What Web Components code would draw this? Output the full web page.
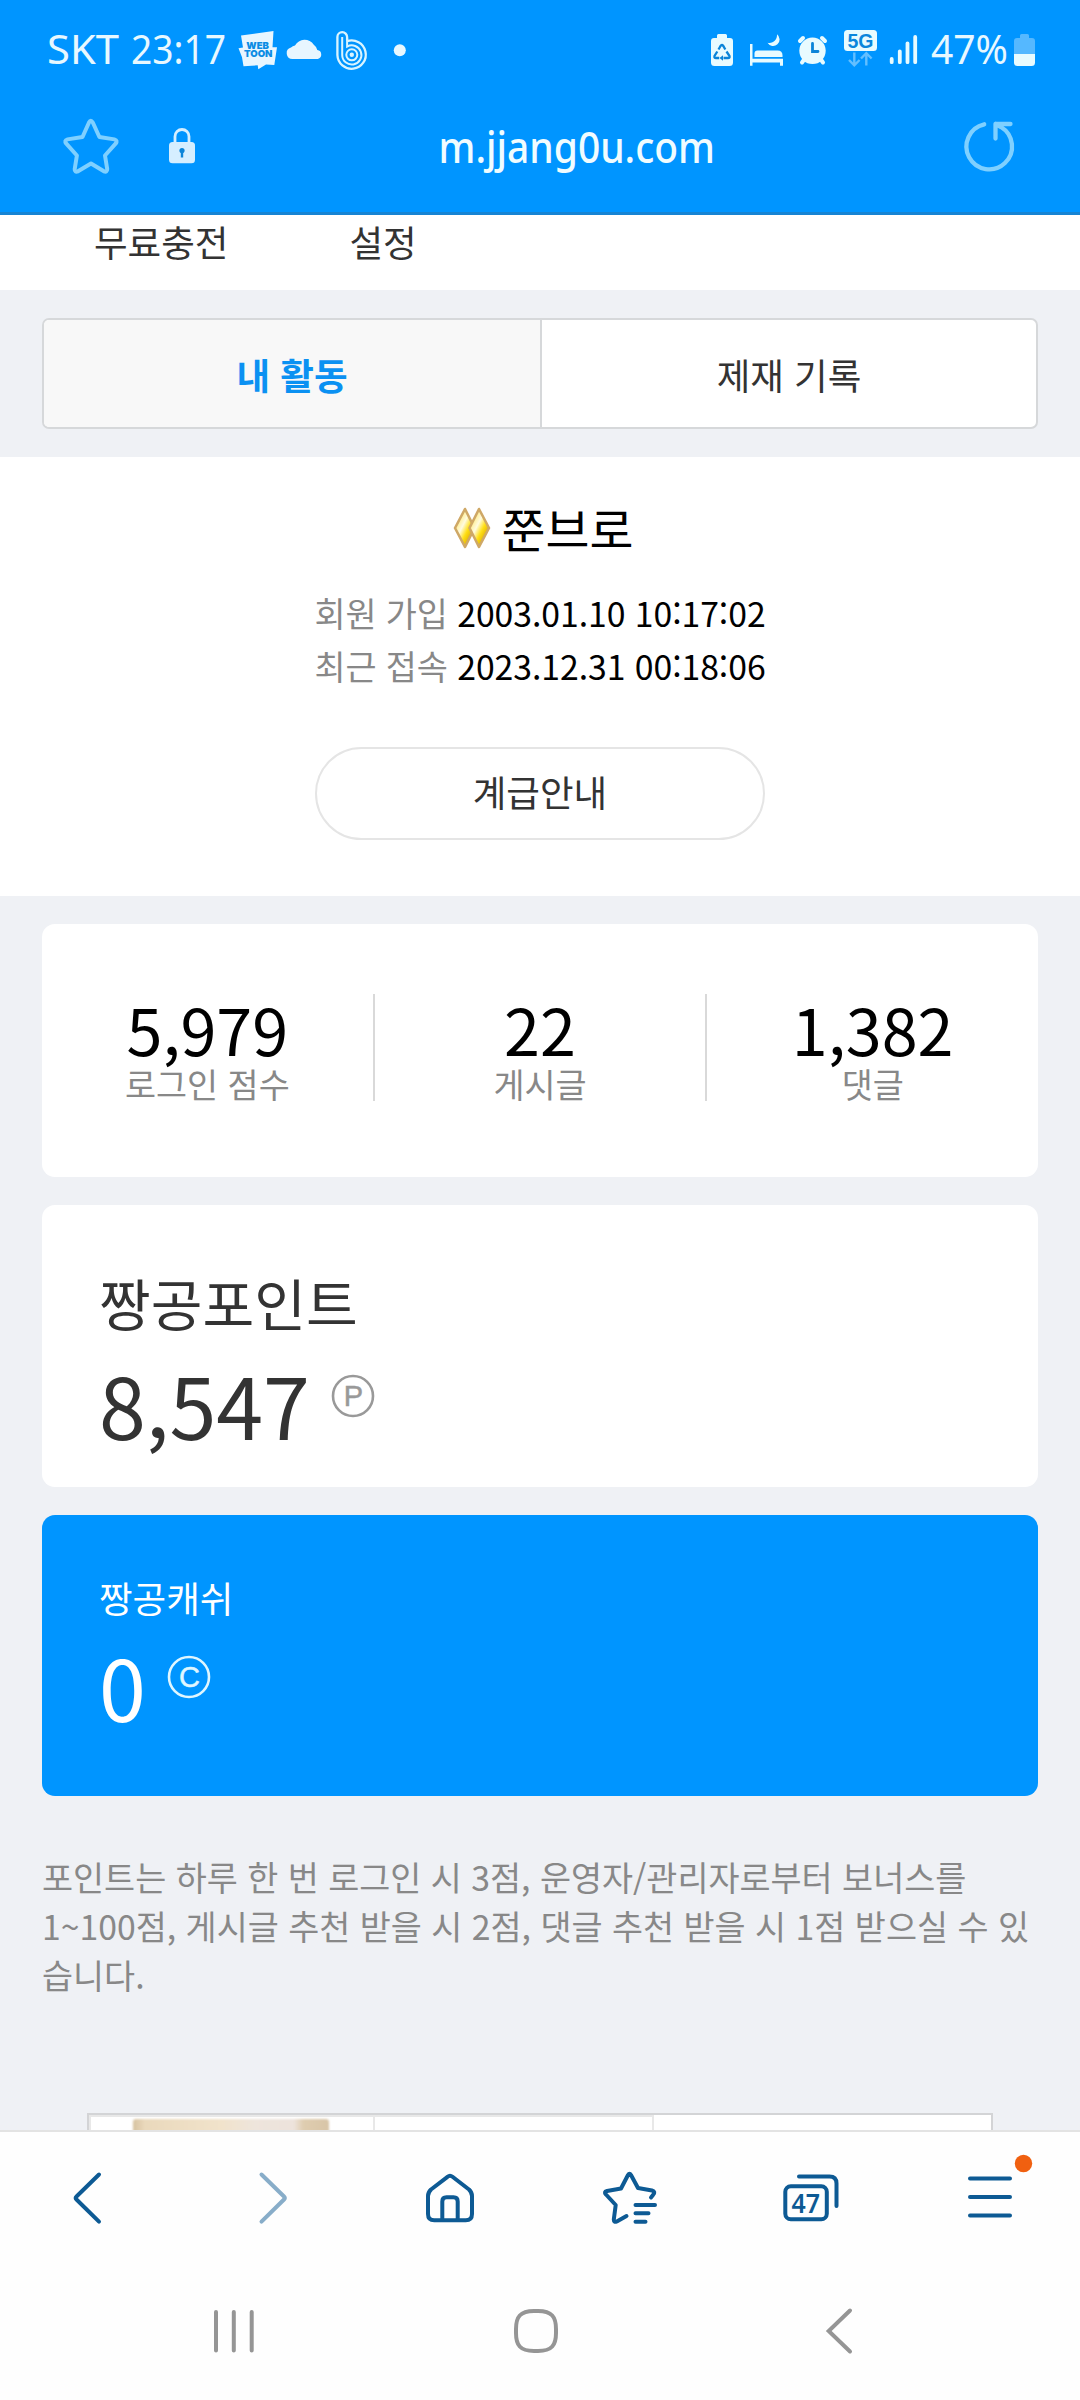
<!DOCTYPE html>
<html lang="ko">
<head>
<meta charset="utf-8">
<title>내 활동</title>
<style>
html,body{margin:0;padding:0}
body{width:1080px;height:2400px;overflow:hidden;background:#eff1f5;font-family:"Noto Sans CJK KR",sans-serif;color:#333}
</style>
</head>
<body>
<my-page></my-page>
<script>
const define = (name, css, html) => customElements.define(name, class extends HTMLElement {
  constructor() {
    super();
    this.attachShadow({mode: 'open'}).innerHTML = `<style>*{box-sizing:border-box}svg{display:block;flex:none;overflow:visible}${css}</style>${html}`;
  }
});

define('status-bar', `
:host{display:flex;justify-content:space-between;height:96px;padding:20px 45px 0 46px}
div{display:flex;height:60px}
text{font-family:"Noto Sans",sans-serif;fill:#e8f8ff}
.w{fill:#0b8ce4;font-family:Inter,sans-serif;font-weight:900}`,
`<div>
<svg width="190" height="60" viewBox="46 20 190 60"><text x="47" y="63.8" font-size="39.5" textLength="72" lengthAdjust="spacingAndGlyphs">SKT</text><text x="131" y="63.8" font-size="39.5" textLength="95" lengthAdjust="spacingAndGlyphs">23:17</text></svg>
<svg width="46" height="60" viewBox="236 20 46 60"><path d="M241 35.5 273.5 31 272.5 47.3H277L274.3 65 266 64.5 258.3 69.3 257.7 65.3 243.5 66.3 242 57.3 238.5 48.3 243 47.5Z" fill="#e8f6ff"/><g font-size="9.6"><text class="w" x="246.3" y="48.600" textLength="22.6" lengthAdjust="spacingAndGlyphs">WEB</text><text class="w" x="244" y="57.2" textLength="28.5" lengthAdjust="spacingAndGlyphs">TOON</text></g></svg>
<svg width="46" height="60" viewBox="282 20 46 60"><path d="M292.5 59a5.8 5.8 0 0 1-1.500-11.400 7 7 0 0 1 4-2.200 11 11 0 0 1 18.800-.6 9 9 0 0 1 3.500 5.200 4.600 4.600 0 0 1 .5 9Z" fill="#e8f6ff"/></svg>
<svg width="56" height="60" viewBox="328 20 56 60" fill="none" stroke="#d9f4ff" stroke-width="2.300"><path d="M347.100 40.600V37a4.800 4.800 0 0 0-9.700 0V55a14.200 14.200 0 1 0 9.700-13.900"/><path d="M342.200 37V55a9.600 9.600 0 1 0 4.900-8.400V38" stroke-width="2"/><circle cx="351.800" cy="54.800" r="5.500" stroke-width="2"/><circle cx="351.800" cy="54.800" r="2.200" fill="#d9f4ff" stroke="none"/></svg>
<svg width="30" height="60" viewBox="384 20 30 60"><circle cx="399.800" cy="50.200" r="6" fill="#e8f8ff"/></svg>
</div>
<div>
<svg width="34" height="60" viewBox="706 20 34 60"><path d="M717 38v-2.500q0-1.500 1.500-1.500h7q1.500 0 1.500 1.500V38h3q3 0 3 3V62.500q0 3.500-3.500 3.500h-15q-3.500 0-3.500-3.500V41q0-3 3-3Z" fill="#e8fbff"/><path d="M718.500 49.500 720.500 46q1.300-2 2.800 0l2 3.500M717.300 51.500 714.500 56q-.6 2 1.500 2h3.200M726.500 51.500l3 4.500q.6 2-1.500 2h-4.500" fill="none" stroke="#0b84d8" stroke-width="2.300"/><path d="M723 55.300v5.500l-3.500-2.800Z" fill="#0b84d8"/></svg>
<svg width="50" height="60" viewBox="740 20 50 60" fill="#e8fbff"><path d="M750 44h2.500v14.700h30.500v7h-3v-3.200h-27.500v3.200H750Z"/><path d="M754.500 57v-3.500q0-3 3-3h20q5 0 5 5V57Z"/><path d="M777 34.300a6.500 6.500 0 1 1-9.500 8.500c5 1.500 10-3 9.500-8.500Z"/></svg>
<svg width="48" height="60" viewBox="790 20 48 60" fill="none" stroke="#e8fbff" stroke-width="4" stroke-linecap="round"><circle cx="812.500" cy="50.800" r="13.200" fill="#e8fbff" stroke="none"/><path d="M800 41 803 38M825 41 822 38M804.500 59 802 62.500M820.500 59 823 62.500"/><path d="M812.500 43.500V51.500H818" stroke="#0b84d8" stroke-width="2.800"/></svg>
<svg width="46" height="60" viewBox="838 20 46 60"><rect x="844" y="30" width="33" height="21" rx="3.500" fill="#e8fbff"/><text x="847.500" y="47.700" font-size="20" style="font-family:'Liberation Sans',sans-serif;font-weight:700;fill:#0b86dc" textLength="26" lengthAdjust="spacingAndGlyphs">5G</text><path d="M854.300 52.500V65M849 60l5.300 5.300 5.300-5.300M866.300 65.500V54M861 58.500l5.300-5.300 5.300 5.300" fill="none" stroke="#63bfff" stroke-width="2.400"/></svg>
<svg width="40" height="60" viewBox="884 20 40 60" stroke="#e8fbff" stroke-width="3.800" stroke-linecap="round"><path d="M891.700 59v3.200M899.800 51.300v10.900M907.500 43.300v18.900M915.200 37v25.200"/></svg>
<svg width="111" height="60" viewBox="924 20 111 60"><text x="931" y="63.800" font-size="39.500" textLength="77" lengthAdjust="spacingAndGlyphs">47%</text><path d="M1020 38v-2.500q0-1.500 1.500-1.500h6q1.500 0 1.500 1.500V38h3q3 0 3 3V54h-21V41q0-3 3-3Z" fill="#55b8ff"/><path d="M1014 54h21v8.500q0 3.500-3.500 3.500h-14q-3.500 0-3.500-3.500Z" fill="#e8fbff"/></svg>
</div>`);

define('address-bar', `
:host{display:flex;height:119px;border-bottom:3px solid #1784d3}
svg{height:100px}text{font-family:"Noto Sans",sans-serif;font-weight:500;fill:#f0fcff}`,
`<svg width="427" viewBox="0 98 427 100"><path d="M89 124.500q1.700-3.300 3.800 0l6.600 14.500 15 2.400q3.700 1 1.200 4.300L105 157.500l2.200 13.500q0 3.600-3.300 2.300L91 165.500 78 173.300q-3.500 1.300-3.300-2.300L76.900 157.500 66.300 145.700q-2.500-3.300 1.200-4.300l15-2.400Z" fill="none" stroke="#7fd0ff" stroke-width="4" stroke-linejoin="round"/><rect x="169" y="144" width="26" height="21.300" rx="3.500" fill="#d5eeff"/><path d="M175 145v-6.500a7 7 0 0 1 14 0V145" fill="none" stroke="#d5eeff" stroke-width="2.800"/><circle cx="182" cy="152.500" r="2.600" fill="#0b84d8"/><path d="M182 152v7.500" stroke="#0b84d8" stroke-width="2.400"/></svg>
<svg width="300" viewBox="427 98 300 100"><text x="438.500" y="164.500" font-size="43" textLength="276.500" lengthAdjust="spacingAndGlyphs">m.jjang0u.com</text></svg>
<svg width="353" viewBox="727 98 353 100" fill="none" stroke="#7fd0ff" stroke-width="4.300" stroke-linecap="round" stroke-linejoin="round"><path d="M984.200 126.300A22.800 22.800 0 1 0 1001 129L995.500 126V140.500M995.500 126H1010.500"/></svg>`);

define('sub-menu', `
:host{display:flex;gap:121px;height:75px;padding:0 94px;background:#fff;font-size:36.560px;line-height:54px}`,
`<span>무료충전</span><span>설정</span>`);

define('activity-tabs', `
:host{display:block;padding:28px 42px}
div{display:flex;height:111px;border:2px solid #d6d8da;border-radius:7px;background:#fff;overflow:hidden}
span{flex:1;text-align:center;font-size:36.560px;line-height:110px}
.on{flex:none;width:498px;background:#f8f8f8;color:#0b91f2;font-weight:700;border-right:2px solid #d6d8da}`,
`<div><span class="on">내 활동</span><span>제재 기록</span></div>`);

define('profile-box', `
:host{display:flex;flex-direction:column;align-items:center;height:439px;background:#fff;padding-top:36px;color:#000}
.n{display:flex;align-items:center;gap:11px;margin-left:6px;font-size:47.800px;line-height:70px}
.d{font-size:33.750px;line-height:53.330px;margin-top:23px;white-space:nowrap;letter-spacing:-.05px}
.d i{font-style:normal;color:#888}
.b{width:450px;height:93px;margin-top:54px;border:2px solid #e5e5e5;border-radius:47px;text-align:center;font-size:36.560px;line-height:86px;color:#333}`,
`<div class="n"><svg width="38" height="42" viewBox="454 507 38 42"><defs><linearGradient id="g" x1="0" y1="0" x2="1" y2="1"><stop offset=".2" stop-color="#ffe97a"/><stop offset=".42" stop-color="#fffbe0"/><stop offset=".6" stop-color="#ffdf14"/><stop offset=".9" stop-color="#c98e00"/></linearGradient></defs><g stroke="#cfa866" stroke-width="2.600" stroke-linejoin="round"><path d="M466 509 475.500 528 466 547 456 528Z" fill="url(#g)"/><path d="M480 509 490 528 480 547 470.500 528Z" fill="url(#g)"/></g></svg><span>쭌브로</span></div>
<div class="d"><i>회원 가입</i> 2003.01.10 10:17:02<br><i>최근 접속</i> 2023.12.31 00:18:06</div>
<div class="b">계급안내</div>`);

define('stat-item', `
:host{flex:1;display:flex;flex-direction:column;align-items:center;height:107px}
b{font-weight:400;font-size:64.690px;line-height:68px;color:#000}
span{font-size:33.750px;line-height:44px;color:#888}`,
`<b><slot></slot></b><span><slot name="label"></slot></span>`);

define('stats-card', `
:host{display:flex;height:253px;margin:0 42px;padding-top:70px;background:#fff;border-radius:13px}
stat-item+stat-item{border-left:2px solid #d9d9d9}`,
`<stat-item>5,979<span slot="label">로그인 점수</span></stat-item><stat-item>22<span slot="label">게시글</span></stat-item><stat-item>1,382<span slot="label">댓글</span></stat-item>`);

define('money-card', `
:host{display:flex;flex-direction:column;margin:0 42px;padding-left:57px;background:#fff;border-radius:13px;height:282px}
:host([cash]){background:#0095ff;color:#fff;height:281px}
.t{font-size:56.250px;line-height:80px;margin-top:57px}
.v{display:flex;gap:21px;font-size:84.400px;line-height:90px;margin-top:16px}
svg{margin-top:16px}
:host([cash]) .t{font-size:36.560px;line-height:52px}
:host([cash]) .v{margin-top:16px}
:host([cash]) svg{margin-top:15px}
.c{stroke:#999}.l{fill:#999;stroke:#999;stroke-width:.5}
:host([cash]) .c{stroke:#dff6ff}:host([cash]) .l{fill:#dff6ff;stroke:#dff6ff}`,
`<div class="t"><slot name="title"></slot></div><div class="v"><slot></slot><svg width="44" height="44"><circle class="c" cx="22" cy="22" r="20" fill="none" stroke-width="2.600"/><text class="l" x="22.500" y="32" text-anchor="middle" font-size="29" font-family="Liberation Sans,sans-serif"></text></svg></div>`);

define('ad-strip', `
:host{display:flex;width:906px;height:18px;margin-left:87px;border:2px solid #d3d4d6;border-bottom:0;background:#fff}
.a{width:284px;border:2px solid #e8e8e8;border-width:2px 0 0 2px;padding:2px 0 0 42px}
.a i{display:block;width:196px;height:15px;border-radius:3px 3px 0 0;background:linear-gradient(90deg,#d6c2a0,#ead9bc 6%,#f1e3cb 45%,#eee5dc 62%,#ede3dc 82%,#dfcdb0 87%,#d8c5a7);filter:blur(1px)}
.b{width:281px;border:2px solid #e8e8e8;border-bottom:0}`,
`<div class="a"><i></i></div><div class="b"></div>`);

define('browser-bar', `
:host{display:flex;justify-content:space-between;height:140px;background:#fefefe;border-top:2px solid #e3e3e3}
svg{height:138px;fill:none;stroke:#0d5a94;stroke-width:4;stroke-linecap:round;stroke-linejoin:round}`,
`<svg width="180" viewBox="0 2132 180 138"><path d="M99 2174.500 76.500 2196.500q-1.500 1.500 0 3L99 2221.700"/></svg>
<svg width="180" viewBox="180 2132 180 138" style="stroke:#88adc9"><path d="M261.500 2174.500 284 2196.500q1.500 1.500 0 3L261.500 2221.700"/></svg>
<svg width="180" viewBox="360 2132 180 138"><path d="M447.500 2176.800q2.500-2 5 0L469 2189.500q3 3 3 6.500V2214q0 6.300-6.300 6.300H434.300q-6.300 0-6.300-6.300V2196q0-3.500 3-6.500ZM442.300 2220v-18.500q0-4.200 4.200-4.200h7q4.200 0 4.200 4.200V2220"/></svg>
<svg width="180" viewBox="540 2132 180 138"><path d="M651 2197.500 653 2195q3-3.500-1-4.500L638 2188 631 2175q-1.500-2.500-3 0L621 2188.500 607 2191q-3.500 1-1 3.500L615.700 2205 613.800 2219.500q0 3.300 3 2L626.500 2216M635.500 2205H655M635.500 2213.300H648.500M635.500 2221.700H645.500"/></svg>
<svg width="180" viewBox="720 2132 180 138"><rect x="785.300" y="2186.300" width="41.500" height="33" rx="5.500"/><path d="M799 2176.500H829.500q7 0 7 7V2206"/><text x="791.500" y="2212.800" font-size="27.500" textLength="28.500" lengthAdjust="spacingAndGlyphs" style="fill:#0d5a94;stroke:none;font-family:'Noto Sans';font-weight:600">47</text></svg>
<svg width="180" viewBox="900 2132 180 138"><path d="M970 2178.500H1010M970 2197H1010M970 2215.500H1010"/><circle cx="1023.500" cy="2163.500" r="8.700" style="fill:#f06010;stroke:none"/></svg>`);

define('system-nav', `
:host{display:flex;justify-content:space-between;height:130px;background:#fefefe}
svg{height:130px;fill:none;stroke:#959595;stroke-width:4;stroke-linecap:round}`,
`<svg width="360" viewBox="0 2270 360 130"><path d="M216 2312V2350.500M233.800 2312V2350.500M251.700 2312V2350.500"/></svg>
<svg width="360" viewBox="360 2270 360 130"><path d="M536 2311h-2c-14 0-18 6-18 18v4c0 12 4 18 18 18h4c14 0 18-6 18-18v-4c0-12-4-18-18-18Z"/></svg>
<svg width="360" viewBox="720 2270 360 130"><path d="M850 2310.500 828.700 2331 850 2351.500"/></svg>`);

define('my-page', `
:host{display:flex;flex-direction:column;height:2400px}
header{background:#0095ff}
main{flex:1;display:flex;flex-direction:column;overflow:hidden}
stats-card{margin-top:28px}
money-card{margin-top:28px;flex:none}
p{margin:56px 40px 0 42px;font-size:33.750px;line-height:49px;color:#888;white-space:nowrap}
ad-strip{margin-top:114px}
activity-tabs,sub-menu,profile-box,stats-card,ad-strip{flex:none}`,
`<header><status-bar></status-bar><address-bar></address-bar></header>
<main><sub-menu></sub-menu><activity-tabs></activity-tabs><profile-box></profile-box><stats-card></stats-card>
<money-card unit="P"><span slot="title">짱공포인트</span>8,547</money-card>
<money-card cash unit="C"><span slot="title">짱공캐쉬</span>0</money-card>
<p>포인트는 하루 한 번 로그인 시 3점, 운영자/관리자로부터 보너스를<br>1~100점, 게시글 추천 받을 시 2점, 댓글 추천 받을 시 1점 받으실 수 있<br>습니다.</p>
<ad-strip></ad-strip></main>
<browser-bar></browser-bar><system-nav></system-nav>`);

document.querySelector('my-page').shadowRoot.querySelectorAll('money-card').forEach(card => {
  card.shadowRoot.querySelector('text').textContent = card.getAttribute('unit');
});
</script>
</body>
</html>
